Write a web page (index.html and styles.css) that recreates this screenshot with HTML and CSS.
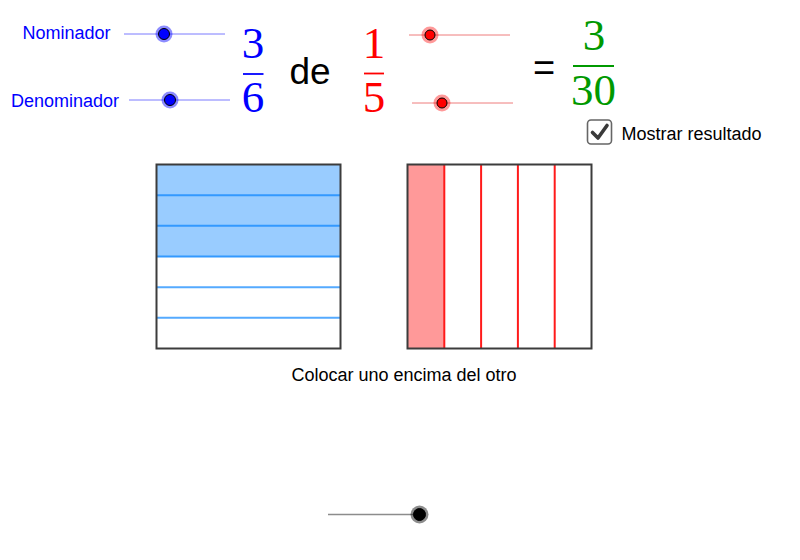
FILE: index.html
```html
<!DOCTYPE html>
<html lang="es">
<head>
<meta charset="utf-8">
<title>Fracción de una fracción</title>
<link rel="stylesheet" href="styles.css">
</head>
<body>
<div class="applet">
<svg class="canvas" width="800" height="560" viewBox="0 0 800 560" xmlns="http://www.w3.org/2000/svg">
  <!-- Labels -->
  <text class="label blue" x="22.5" y="38.5">Nominador</text>
  <text class="label blue" x="11" y="106.5">Denominador</text>

  <!-- Blue sliders -->
  <g class="slider">
    <line class="track track-blue" x1="124" y1="34" x2="225" y2="34"/>
    <circle class="halo halo-blue" cx="164" cy="34" r="8.5"/>
    <circle class="knob knob-blue" cx="164" cy="34" r="5.5"/>
  </g>
  <g class="slider">
    <line class="track track-blue" x1="129" y1="100" x2="230" y2="100"/>
    <circle class="halo halo-blue" cx="170" cy="100" r="8.5"/>
    <circle class="knob knob-blue" cx="170" cy="100" r="5.5"/>
  </g>

  <!-- Fraction 3/6 -->
  <g class="frac blue">
    <text class="digit" x="253" y="58">3</text>
    <line class="bar bar-blue" x1="243" y1="74" x2="263.5" y2="74"/>
    <text class="digit" x="253" y="112">6</text>
  </g>

  <text class="word" x="289.5" y="83.5">de</text>

  <!-- Fraction 1/5 -->
  <g class="frac red">
    <text class="digit" x="374" y="58">1</text>
    <line class="bar bar-red" x1="364" y1="73.5" x2="384" y2="73.5"/>
    <text class="digit" x="374" y="112">5</text>
  </g>

  <!-- Red sliders -->
  <g class="slider">
    <line class="track track-red" x1="409" y1="35" x2="510" y2="35"/>
    <circle class="halo halo-red" cx="430" cy="35" r="8.5"/>
    <circle class="knob knob-red" cx="430" cy="35" r="5"/>
  </g>
  <g class="slider">
    <line class="track track-red" x1="412" y1="103" x2="513" y2="103"/>
    <circle class="halo halo-red" cx="442" cy="103" r="8.5"/>
    <circle class="knob knob-red" cx="442" cy="103" r="5"/>
  </g>

  <text class="equals" x="533" y="81">=</text>

  <!-- Result 3/30 -->
  <g class="frac green">
    <text class="digit" x="594" y="49.5">3</text>
    <line class="bar bar-green" x1="573" y1="66" x2="614" y2="66"/>
    <text class="digit" x="593.5" y="105">30</text>
  </g>

  <!-- Checkbox -->
  <g class="checkbox">
    <rect class="box" x="587.5" y="120" width="24" height="24" rx="3.5"/>
    <path class="tick" d="M592.5 132.5 L598 138 L607 125.5"/>
  </g>
  <text class="label dark" x="621.5" y="140">Mostrar resultado</text>

  <!-- Blue square: 6 rows, 3 filled -->
  <g class="square">
    <rect class="fill-blue" x="156.5" y="164.5" width="184" height="92"/>
    <line class="div-blue" x1="156.5" y1="195.2" x2="340.5" y2="195.2"/>
    <line class="div-blue" x1="156.5" y1="225.8" x2="340.5" y2="225.8"/>
    <line class="div-blue" x1="156.5" y1="256.5" x2="340.5" y2="256.5"/>
    <line class="div-blue light" x1="156.5" y1="287.2" x2="340.5" y2="287.2"/>
    <line class="div-blue light" x1="156.5" y1="317.8" x2="340.5" y2="317.8"/>
    <rect class="frame" x="156.5" y="164.5" width="184" height="184"/>
  </g>

  <!-- Red square: 5 columns, 1 filled -->
  <g class="square">
    <rect class="fill-red" x="407.5" y="164.5" width="36.8" height="184"/>
    <line class="div-red" x1="444.3" y1="164.5" x2="444.3" y2="348.5"/>
    <line class="div-red" x1="481.1" y1="164.5" x2="481.1" y2="348.5"/>
    <line class="div-red" x1="517.9" y1="164.5" x2="517.9" y2="348.5"/>
    <line class="div-red" x1="554.7" y1="164.5" x2="554.7" y2="348.5"/>
    <rect class="frame" x="407.5" y="164.5" width="184" height="184"/>
  </g>

  <text class="label dark" x="291.5" y="381">Colocar uno encima del otro</text>

  <!-- Black slider -->
  <g class="slider">
    <line class="track track-grey" x1="328" y1="514.5" x2="420" y2="514.5"/>
    <circle class="halo halo-grey" cx="419.5" cy="514.5" r="9"/>
    <circle class="knob knob-black" cx="419.5" cy="514.5" r="6"/>
  </g>
</svg>
</div>
</body>
</html>
```
FILE: styles.css
```css
html, body {
  margin: 0;
  padding: 0;
  background: #ffffff;
}

.applet {
  width: 800px;
  height: 560px;
  overflow: hidden;
}

.canvas {
  display: block;
}

.label {
  font-family: "Liberation Sans", Arial, sans-serif;
  font-size: 18px;
}

.blue { fill: #0000ff; }
.red { fill: #ff0000; }
.green { fill: #009900; }
.dark { fill: #000000; }

.word,
.equals {
  font-family: "Liberation Sans", Arial, sans-serif;
  fill: #000000;
}

.word { font-size: 37px; }
.equals { font-size: 38px; }

.digit {
  font-family: "Liberation Serif", "Times New Roman", serif;
  font-size: 45px;
  text-anchor: middle;
}

.bar { stroke-width: 1.8; }
.bar-blue { stroke: #0000ff; }
.bar-red { stroke: #ff0000; }
.bar-green { stroke: #009900; }

.track { stroke-width: 1; }
.track-blue { stroke: #7a7aff; }
.track-red { stroke: #ee7c7c; }
.track-grey { stroke: #8c8c8c; stroke-width: 1.3; }

.halo-blue { fill: rgba(0, 0, 255, 0.45); }
.halo-red { fill: rgba(255, 0, 0, 0.4); }
.halo-grey { fill: rgba(0, 0, 0, 0.45); }

.knob { stroke: #000000; stroke-width: 1; }
.knob-blue { fill: #0000ff; }
.knob-red { fill: #ff0000; }
.knob-black { fill: #000000; }

.box {
  fill: #ffffff;
  stroke: #666666;
  stroke-width: 1.6;
}

.tick {
  fill: none;
  stroke: #3a3a3a;
  stroke-width: 3.6;
  stroke-linecap: round;
  stroke-linejoin: round;
}

.fill-blue { fill: #99ccff; }
.fill-red { fill: #ff9999; }

.div-blue { stroke: #3399ff; stroke-width: 2; }
.div-blue.light { stroke: #55aaff; }
.div-red { stroke: #ff1a1a; stroke-width: 2; }

.frame {
  fill: none;
  stroke: #3c3c3c;
  stroke-width: 2;
}
```
